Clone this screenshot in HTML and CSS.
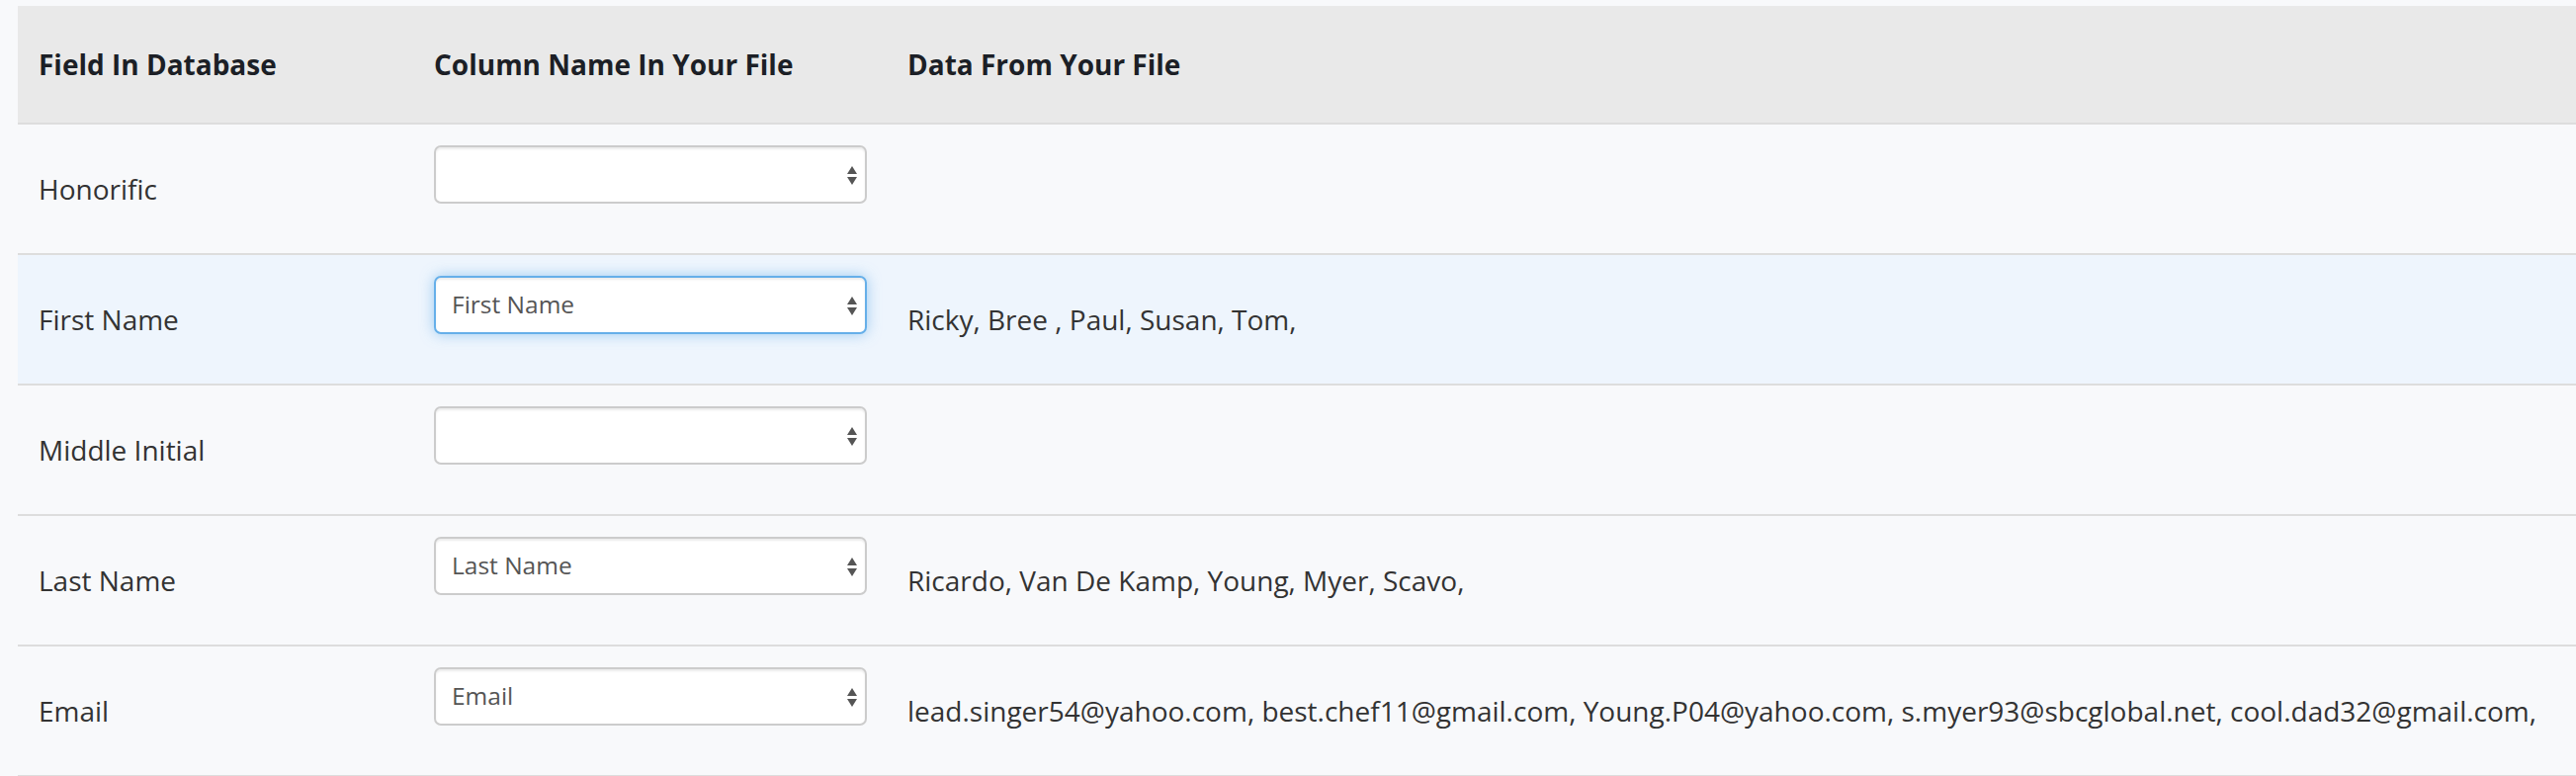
FILE: index.html
```html
<!DOCTYPE html>
<html lang="en">
<head>
<meta charset="utf-8">
<title>Map Columns</title>
<link rel="stylesheet" href="styles.css">
</head>
<body>
<div class="page">
  <table class="map-table">
    <colgroup>
      <col class="col-field">
      <col class="col-column">
      <col class="col-data">
    </colgroup>
    <thead>
      <tr>
        <th>Field In Database</th>
        <th>Column Name In Your File</th>
        <th>Data From Your File</th>
      </tr>
    </thead>
    <tbody>
      <tr>
        <td class="label">Honorific</td>
        <td class="pick">
          <span class="select-wrap">
            <select class="select"><option></option></select>
            <svg class="arrows" width="10" height="19" viewBox="0 0 10 19"><polygon points="5,0 10,8 0,8"/><polygon points="0,11 10,11 5,19"/></svg>
          </span>
        </td>
        <td class="data"></td>
      </tr>
      <tr class="active">
        <td class="label">First Name</td>
        <td class="pick">
          <span class="select-wrap">
            <select class="select is-focused"><option>First Name</option></select>
            <svg class="arrows" width="10" height="19" viewBox="0 0 10 19"><polygon points="5,0 10,8 0,8"/><polygon points="0,11 10,11 5,19"/></svg>
          </span>
        </td>
        <td class="data">Ricky, Bree , Paul, Susan, Tom,</td>
      </tr>
      <tr>
        <td class="label">Middle Initial</td>
        <td class="pick">
          <span class="select-wrap">
            <select class="select"><option></option></select>
            <svg class="arrows" width="10" height="19" viewBox="0 0 10 19"><polygon points="5,0 10,8 0,8"/><polygon points="0,11 10,11 5,19"/></svg>
          </span>
        </td>
        <td class="data"></td>
      </tr>
      <tr>
        <td class="label">Last Name</td>
        <td class="pick">
          <span class="select-wrap">
            <select class="select"><option>Last Name</option></select>
            <svg class="arrows" width="10" height="19" viewBox="0 0 10 19"><polygon points="5,0 10,8 0,8"/><polygon points="0,11 10,11 5,19"/></svg>
          </span>
        </td>
        <td class="data">Ricardo, Van De Kamp, Young, Myer, Scavo,</td>
      </tr>
      <tr>
        <td class="label">Email</td>
        <td class="pick">
          <span class="select-wrap">
            <select class="select"><option>Email</option></select>
            <svg class="arrows" width="10" height="19" viewBox="0 0 10 19"><polygon points="5,0 10,8 0,8"/><polygon points="0,11 10,11 5,19"/></svg>
          </span>
        </td>
        <td class="data">lead.singer54@yahoo.com, best.chef11@gmail.com, Young.P04@yahoo.com, s.myer93@sbcglobal.net, cool.dad32@gmail.com,</td>
      </tr>
    </tbody>
  </table>
</div>
</body>
</html>
```

FILE: styles.css
```css
html, body {
  margin: 0;
  padding: 0;
  background: #f8f9fb;
  overflow: hidden;
}

body {
  font-family: "Open Sans", "DejaVu Sans", sans-serif;
  color: #333333;
}

.page {
  padding: 6px 0 0 18px;
}

.map-table {
  border-collapse: collapse;
  border-spacing: 0;
  width: 2600px;
  table-layout: fixed;
}

.col-field { width: 400px; }
.col-column { width: 479px; }
.col-data { width: auto; }

.map-table th {
  background: #e9e9e9;
  color: #1c1f26;
  font-weight: 700;
  font-size: 28px;
  line-height: 76px;
  padding: 21px;
  text-align: left;
  border-bottom: 2px solid #dddddd;
  white-space: nowrap;
}

.map-table td {
  font-size: 28px;
  line-height: 40px;
  padding: 21px;
  vertical-align: middle;
  border-bottom: 2px solid #dddddd;
  white-space: nowrap;
}

.map-table tr.active td {
  background: #eef5fd;
}

.map-table td.pick {
  vertical-align: top;
}

.select-wrap {
  position: relative;
  display: block;
  width: 438px;
  height: 59px;
  margin-bottom: 29px;
}

.select {
  -webkit-appearance: none;
  appearance: none;
  display: block;
  box-sizing: border-box;
  width: 438px;
  height: 59px;
  margin: 0;
  padding: 0 40px 2px 16px;
  font-family: "Open Sans", "DejaVu Sans", sans-serif;
  font-size: 24.5px;
  color: #555555;
  background: #ffffff;
  border: 2px solid #cccccc;
  border-radius: 7px;
  box-shadow: inset 0 2px 2px rgba(0, 0, 0, 0.075);
  outline: none;
}

.select.is-focused {
  border-color: #66afe9;
  box-shadow: inset 0 2px 2px rgba(0, 0, 0, 0.075), 0 0 14px rgba(102, 175, 233, 0.6);
}

.arrows {
  position: absolute;
  right: 10px;
  top: 50%;
  margin-top: -9px;
  fill: #555555;
  pointer-events: none;
}
```
